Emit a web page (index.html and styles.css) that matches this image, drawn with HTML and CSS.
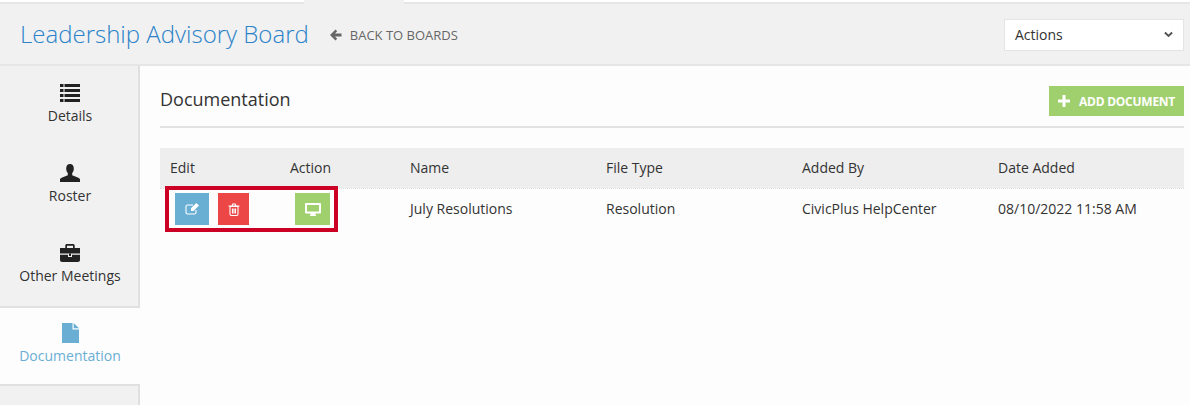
FILE: index.html
```html
<!DOCTYPE html>
<html lang="en">
<head>
<meta charset="utf-8">
<title>Leadership Advisory Board</title>
<link rel="stylesheet" href="styles.css">
</head>
<body>
<div class="topline"><span class="topline-a"></span><span class="topline-gap"></span><span class="topline-b"></span></div>
<header class="header">
  <h1 class="title">Leadership Advisory Board</h1>
  <a class="back"><svg class="back-icon" viewBox="0 0 13 12"><path d="M6.500 0.500 1 6l5.500 5.500 1.700-1.700L6 7.500h6.500v-3H6l2.200-2.300z"/></svg>BACK TO BOARDS</a>
  <div class="select">Actions<svg class="chev" viewBox="0 0 10 7"><path d="M1 1.200 5 5 9 1.200" /></svg></div>
</header>
<div class="main">
  <nav class="side">
    <div class="item">
      <svg class="ico" viewBox="0 0 20 18"><path d="M0 0h3.500v3H0zM4.500 0H20v3H4.500zM0 5h3.500v3H0zM4.500 5H20v3H4.500zM0 10h3.500v3H0zM4.500 10H20v3H4.500zM0 15h3.500v3H0zM4.500 15H20v3H4.500z"/></svg>
      <span>Details</span>
    </div>
    <div class="item">
      <svg class="ico" viewBox="0 0 20 18"><path d="M10 0c2.600 0 3.800 2 3.800 4.500 0 2-.7 3.600-1.600 4.600v2.100l5.600 2.200c1.500.6 2.200 1.300 2.200 2.100V18H0v-2.500c0-.8.700-1.500 2.200-2.100l5.600-2.200V9.100C6.900 8.100 6.200 6.500 6.200 4.500 6.200 2 7.400 0 10 0z"/></svg>
      <span>Roster</span>
    </div>
    <div class="item">
      <svg class="ico" viewBox="0 0 20 18"><path d="M7 0h6c1 0 1.700.7 1.700 1.700V4H20v5.500H0V4h5.300V1.700C5.300.7 6 0 7 0zm0 1.700V4h6V1.700zM0 10.800h8V13h4v-2.200h8V16c0 1.100-.9 2-2 2H2c-1.100 0-2-.9-2-2zM9 9.800h2V12H9z"/></svg>
      <span>Other Meetings</span>
    </div>
    <div class="item active">
      <svg class="ico doc" viewBox="0 0 17 20"><path d="M0 0h10.500v6.500H17V20H0zM11.700 0 17 5.300h-5.300z"/></svg>
      <span>Documentation</span>
    </div>
    <div class="item rest"></div>
  </nav>
  <section class="content">
    <div class="head">
      <h2 class="heading">Documentation</h2>
      <button class="add"><svg class="plus" viewBox="0 0 12 12"><path d="M4.500 0h3v4.500H12v3H7.500V12h-3V7.500H0v-3h4.500z"/></svg>ADD DOCUMENT</button>
    </div>
    <div class="table">
      <div class="row thead">
        <div>Edit</div><div>Action</div><div>Name</div><div>File Type</div><div>Added By</div><div>Date Added</div>
      </div>
      <div class="row tbody">
        <div class="cell-btns">
          <span class="btn blue"><svg class="bi" viewBox="0 0 14 12"><path class="ln" d="M11 7v2.500c0 .8-.7 1.500-1.500 1.500h-7C1.700 11 1 10.300 1 9.500v-6C1 2.700 1.700 2 2.500 2H8"/><path class="fl" d="M11.300 0 14 2.500 8.500 8H6V5.300z"/></svg></span>
          <span class="btn red"><svg class="bi trash" viewBox="0 0 12 13"><path class="ln" d="M2 3.500h8V11c0 .8-.6 1.500-1.300 1.500H3.300C2.600 12.500 2 11.800 2 11zM.5 3h11M4 3l.8-2h2.400L8 3M4.500 5.500V10.500M6 5.500V10.500M7.500 5.500V10.500"/></svg></span>
          <span class="btn green"><svg class="bi screen" viewBox="0 0 16 13"><path class="fl" fill-rule="evenodd" d="M1 0h14c.6 0 1 .4 1 1v8.500c0 .6-.4 1-1 1H1c-.6 0-1-.4-1-1V1c0-.6.4-1 1-1zm1 2v6.500h12V2zM5.500 10.500h5V12l1 1h-7l1-1z"/></svg></span>
        </div>
        <div>July Resolutions</div><div>Resolution</div><div>CivicPlus HelpCenter</div><div>08/10/2022 11:58 AM</div>
      </div>
      <div class="callout"></div>
    </div>
  </section>
</div>
</body>
</html>
```
FILE: styles.css
```css
html, body { margin: 0; padding: 0; }
body {
  width: 1190px;
  height: 405px;
  overflow: hidden;
  background: #fdfdfd;
  font-family: "Open Sans", sans-serif;
  font-size: 14px;
  color: #333;
}
.topline { display: flex; height: 4px; }
.topline-a { width: 304px; background: #fff; border-bottom: 2px solid #e6e6e6; box-sizing: border-box; }
.topline-gap { width: 100px; background: #f1f1f1; }
.topline-b { flex: 1; background: #fff; border-bottom: 2px solid #e6e6e6; box-sizing: border-box; }
.header {
  height: 60px;
  display: flex;
  align-items: center;
  padding: 0 6px 0 20px;
  background: #f1f1f1;
  border-bottom: 2px solid #e6e6e6;
}
.title {
  margin: 0;
  font-size: 24px;
  font-weight: 300;
  color: #2b82c9;
  line-height: 60px;
}
.back {
  display: flex;
  align-items: center;
  margin-left: 20px;
  margin-top: 2px;
  font-size: 13px;
  color: #666;
}
.back-icon { width: 13px; height: 12px; margin-right: 8px; fill: #666; }
.select {
  display: flex;
  align-items: center;
  justify-content: space-between;
  box-sizing: border-box;
  width: 180px;
  height: 32px;
  margin-left: auto;
  margin-top: 2px;
  padding: 0 10px 2px 10px;
  background: #fff;
  border: 1px solid #e4e4e4;
  font-size: 14px;
  color: #333;
}
.chev { width: 9px; height: 7px; fill: none; stroke: #555; stroke-width: 2.2; }
.main { display: flex; height: 339px; }
.side {
  flex: none;
  width: 140px;
  display: flex;
  flex-direction: column;
}
.item {
  flex: none;
  box-sizing: border-box;
  height: 80px;
  display: flex;
  flex-direction: column;
  align-items: center;
  padding: 18px 0 0 2px;
  background: #f1f1f1;
  border-right: 2px solid #e0e0e0;
  line-height: 20px;
  color: #333;
}
.item span { margin-top: 4px; }
.ico { width: 20px; height: 18px; fill: #222; display: block; }
.item.active {
  background: #fdfdfd;
  border-right: 0;
  border-top: 2px solid #e0e0e0;
  border-bottom: 2px solid #e0e0e0;
  padding: 15px 0 0;
  color: #6aaed4;
}
.item.active span { margin-top: 3px; }
.ico.doc { width: 17px; height: 20px; fill: #6aaed4; }
.item.rest { flex: 1; }
.content { flex: 1; padding: 0 6px 0 20px; min-width: 0; }
.head {
  display: flex;
  align-items: center;
  justify-content: space-between;
  box-sizing: border-box;
  height: 62px;
  padding-top: 6px;
  border-bottom: 2px solid #e2e2e2;
}
.heading { margin: 0; font-size: 18px; font-weight: 400; color: #333; }
.add {
  display: flex;
  align-items: center;
  box-sizing: border-box;
  width: 135px;
  height: 30px;
  margin: 4px 0 0;
  padding: 0 0 0 9px;
  border: 0;
  background: #a0d06e;
  color: #fff;
  font-family: "Open Sans", sans-serif;
  font-size: 12px;
  font-weight: 700;
  letter-spacing: -0.25px;
  white-space: nowrap;
}
.plus { width: 12px; height: 12px; margin-right: 9px; fill: #fff; }
.table { position: relative; margin-top: 20px; }
.row {
  display: grid;
  grid-template-columns: 120px 120px 196px 196px 196px 1fr;
  align-items: center;
}
.row > div { padding-left: 10px; padding-bottom: 2px; }
.thead { height: 40px; background: #eeeeee; font-weight: 500; font-size: 14px; color: #333; }
.tbody { height: 40px; grid-template-columns: 240px 196px 196px 196px 1fr; border-top: 1px dotted #ddd; }
.row > .cell-btns { padding: 0 0 0 15px; display: flex; align-items: center; }
.btn { flex: none; display: flex; align-items: center; justify-content: center; height: 32px; }
.blue { width: 34px; background: #69aed3; }
.red { width: 31px; margin-left: 9px; background: #ec4646; }
.green { width: 35px; margin-left: 46px; background: #a0d06e; }
.bi { width: 14px; height: 12px; overflow: visible; }
.trash { width: 12px; height: 13px; }
.screen { width: 16px; height: 13px; }
.ln { fill: none; stroke: #fff; stroke-width: 1.1; }
.fl { fill: #fff; }
.callout {
  position: absolute;
  left: 5px;
  top: 38px;
  width: 165px;
  height: 38px;
  border: 4px solid #cb0024;
}
```
